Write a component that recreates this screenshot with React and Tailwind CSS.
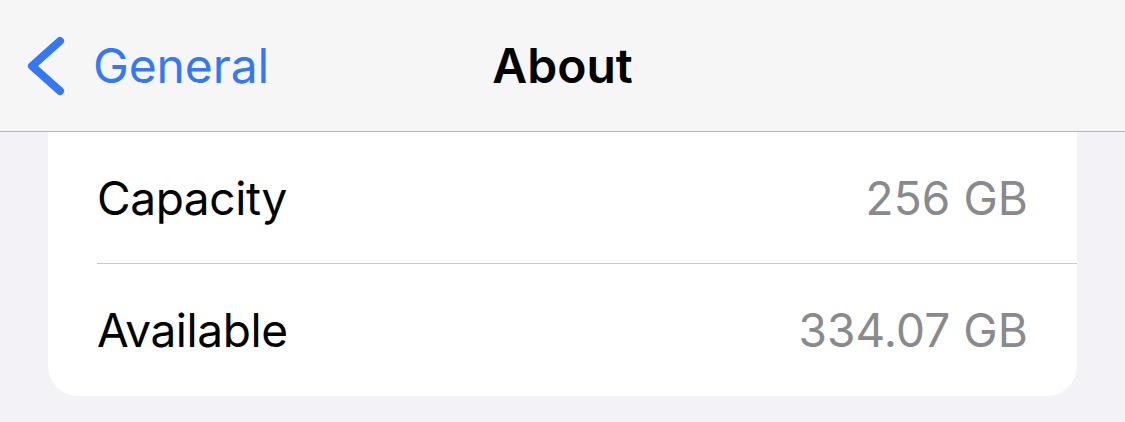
export default function App() {
  const rows = [
    { label: 'Capacity', value: '256 GB' },
    { label: 'Available', value: '334.07 GB' }
  ]

  return (
    <div className="w-[1125px] h-[422px] overflow-hidden bg-[#f2f2f7] font-['Inter',sans-serif]">
      {/* Nav bar */}
      <div className="h-[132px] bg-[#f6f6f6] border-b border-[#b4b4b6] grid grid-cols-[1fr_auto_1fr] items-center">
        <div className="flex items-center pl-[25px] text-[#3478f6]">
          <svg width="44" height="62" viewBox="0 0 44 62" fill="none">
            <path d="M35 6 L7 31 L35 56" stroke="currentColor" strokeWidth="8" strokeLinecap="round" strokeLinejoin="round" />
          </svg>
          <span className="ml-[24px] text-[48px] tracking-[-0.1px] leading-none">General</span>
        </div>
        <h1 className="text-[48px] font-semibold leading-none text-black tracking-[0px]">About</h1>
        <div />
      </div>

      {/* Grouped list */}
      <div className="mx-[48px] bg-white rounded-b-[30px]">
        {rows.map((row, i) => (
          <div key={row.label} className="pl-[49px]">
            <div className={`h-[132px] flex items-center justify-between pr-[49px] ${i < rows.length - 1 ? 'border-b border-[#c8c8cc]' : ''}`}>
              <span className="text-[46px] text-black leading-none tracking-[-0.4px]">{row.label}</span>
              <span className="text-[46px] text-[#8a8a8e] leading-none tracking-[0.1px]">{row.value}</span>
            </div>
          </div>
        ))}
      </div>
    </div>
  )
}
